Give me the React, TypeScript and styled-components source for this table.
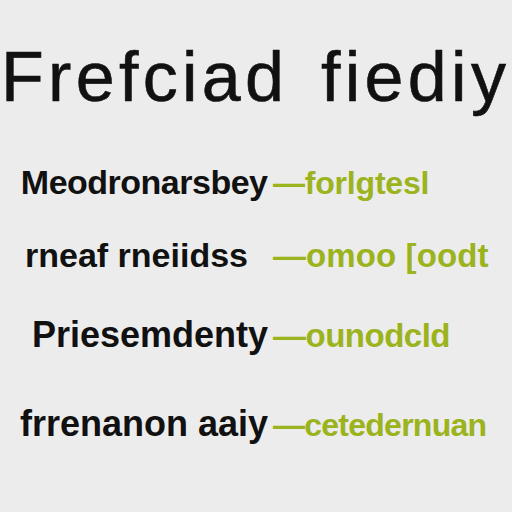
import React from "react";
import styled, { createGlobalStyle } from "styled-components";

const Global = createGlobalStyle`
  html, body { margin: 0; padding: 0; background: #ececec; }
  body { width: 512px; height: 512px; overflow: hidden; }
`;

const Page = styled.div`
  width: 512px;
  height: 512px;
  background: #ececec;
  font-family: "Liberation Sans", Arial, sans-serif;
  display: flex;
  flex-direction: column;
  padding-top: 42px;
  box-sizing: border-box;
`;

const Title = styled.h1`
  margin: 0 0 0 1px;
  font-size: 70px;
  line-height: 70px;
  font-weight: 400;
  color: #111;
  white-space: nowrap;
  letter-spacing: 4.3px;
  word-spacing: 9px;
  -webkit-text-stroke: 0.6px #111;
`;

const Row = styled.div<{ $gap: number }>`
  display: grid;
  grid-template-columns: 268px auto;
  column-gap: 5px;
  align-items: baseline;
  margin-top: ${(p) => p.$gap}px;
  height: 30px;
  line-height: 30px;
  white-space: nowrap;
`;

const Term = styled.span<{ $pad: number; $ls: number; $size: number }>`
  justify-self: end;
  padding-right: ${(p) => p.$pad}px;
  color: #111;
  font-size: ${(p) => p.$size}px;
  font-weight: 700;
  letter-spacing: ${(p) => p.$ls}px;
  margin-right: ${(p) => -p.$ls}px;
`;

const Def = styled.span<{ $ls: number; $size: number }>`
  color: #9bb31c;
  font-size: ${(p) => p.$size}px;
  font-weight: 700;
  letter-spacing: ${(p) => p.$ls}px;
`;

const rows = [
  { gap: 55, term: "Meodronarsbey", def: "—forlgtesl", pad: 0, ts: 34, tls: -0.5, ds: 32, dls: -0.2 },
  { gap: 43, term: "rneaf rneiidss", def: "—omoo [oodt", pad: 20, ts: 34, tls: 0, ds: 33, dls: 0.1 },
  { gap: 50, term: "Priesemdenty", def: "—ounodcld", pad: 0, ts: 36, tls: 0, ds: 33, dls: -0.5 },
  { gap: 59, term: "frrenanon aaiy", def: "—cetedernuan", pad: 0, ts: 36, tls: 0, ds: 32, dls: -0.75 },
];

export default function App() {
  return (
    <Page>
      <Global />
      <Title>Frefciad fiediy</Title>
      {rows.map((r) => (
        <Row key={r.term} $gap={r.gap}>
          <Term $pad={r.pad} $ls={r.tls} $size={r.ts}>{r.term}</Term>
          <Def $ls={r.dls} $size={r.ds}>{r.def}</Def>
        </Row>
      ))}
    </Page>
  );
}
